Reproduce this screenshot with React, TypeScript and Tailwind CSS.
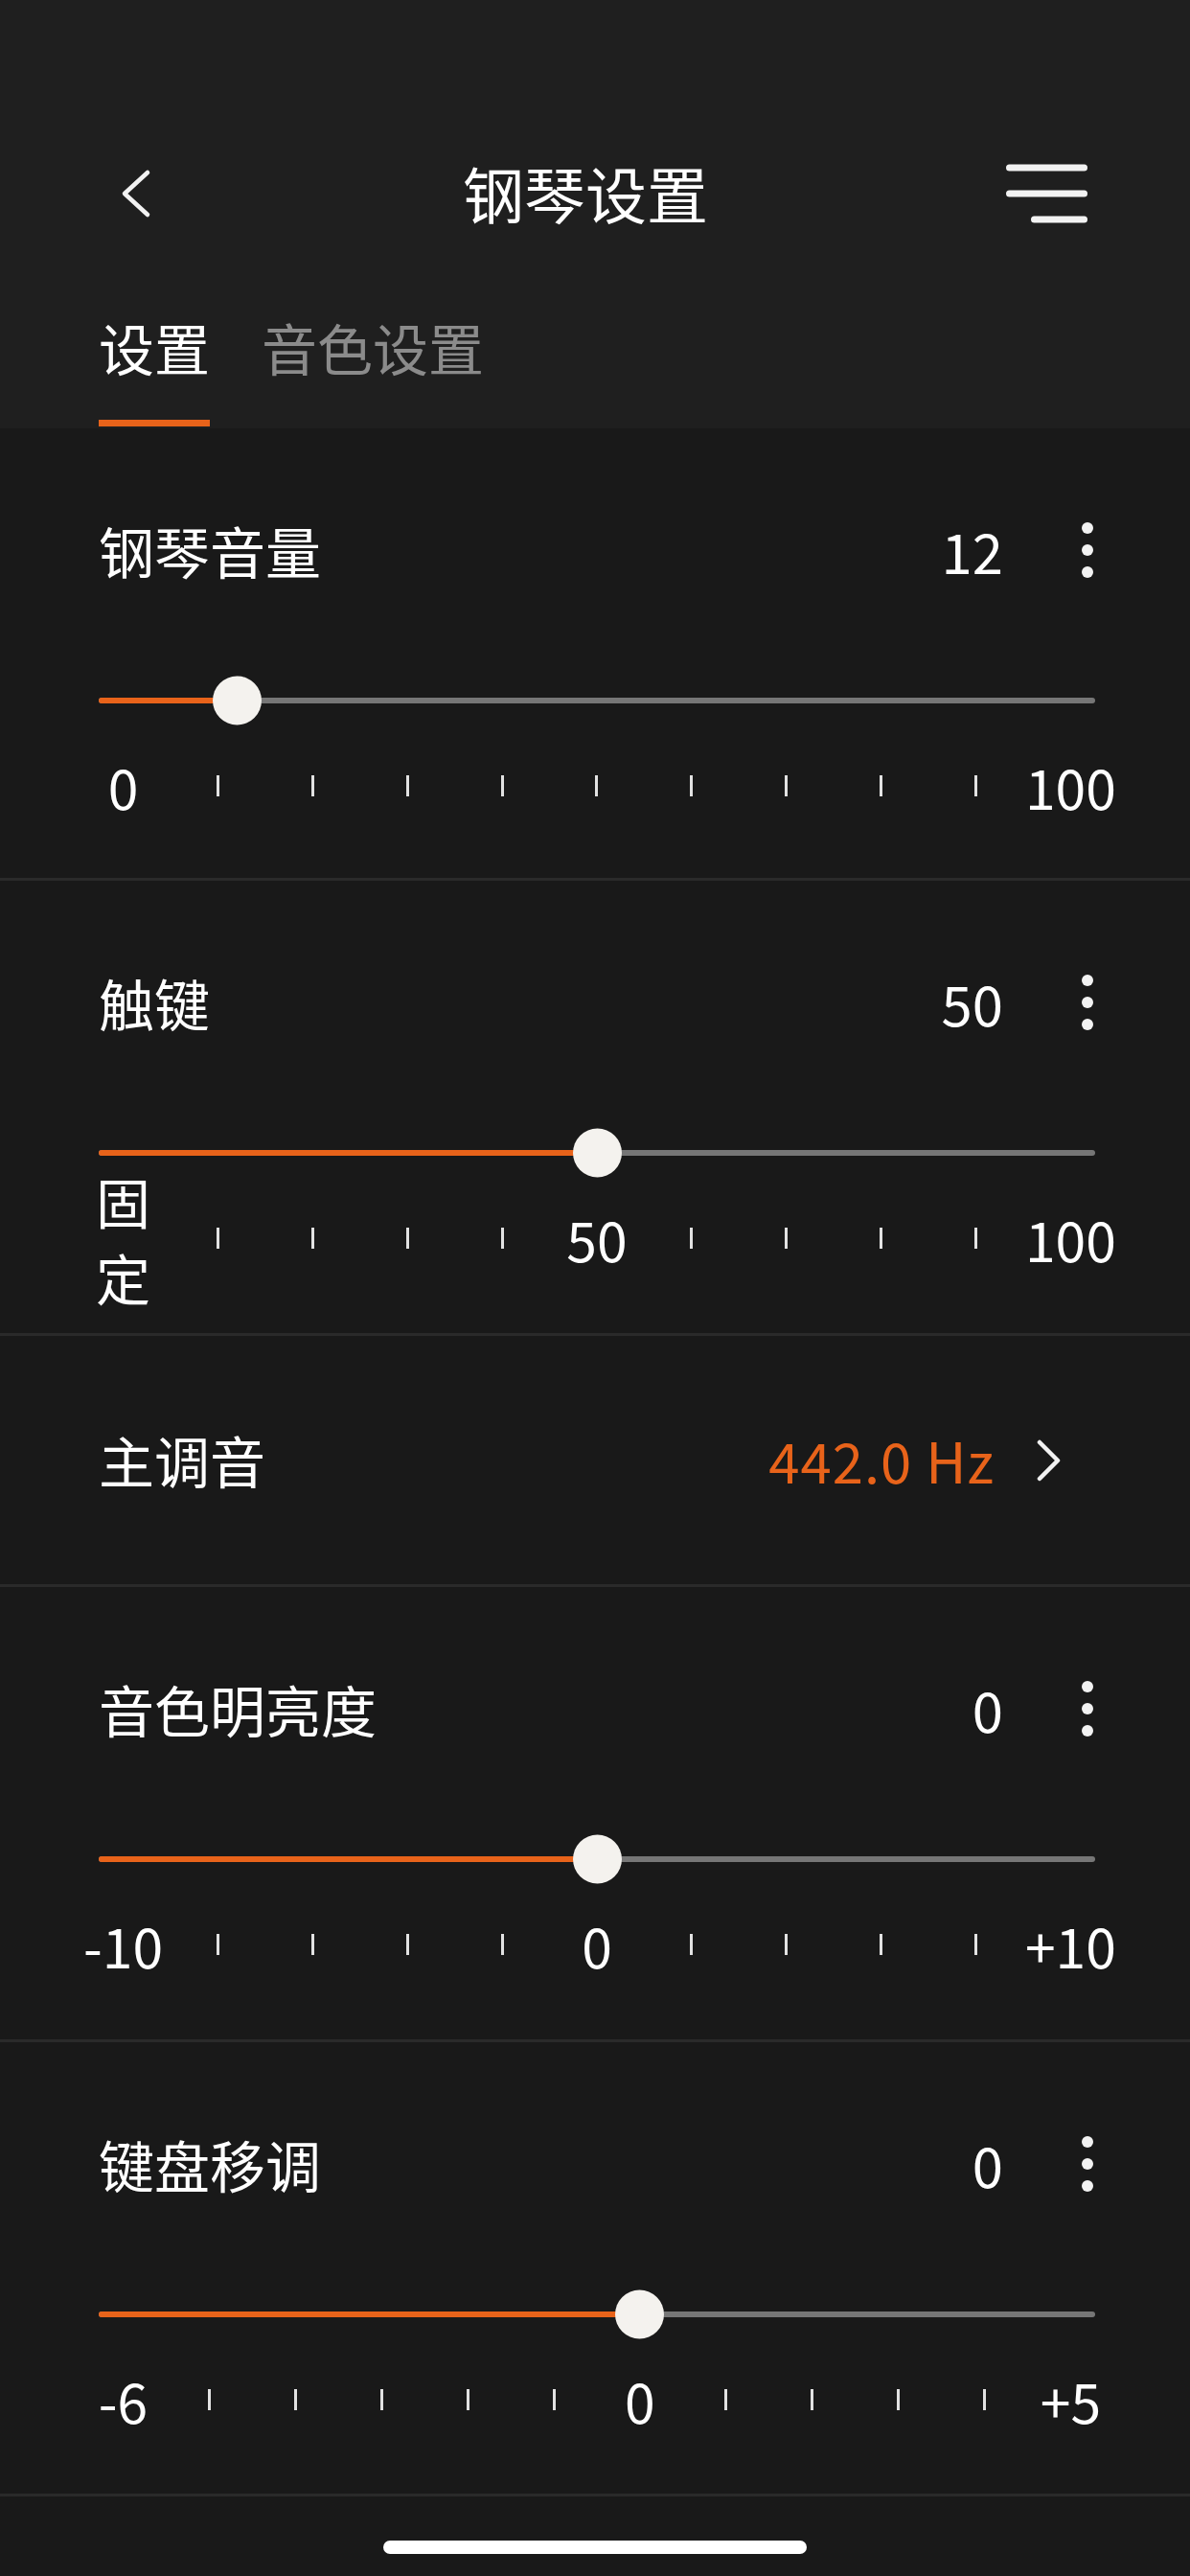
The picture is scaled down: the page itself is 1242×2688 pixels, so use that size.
import React from 'react';

const FONT = '"Noto Sans CJK SC", "Noto Sans", sans-serif';

interface SliderSetting {
  label: string;
  value: string;
  fraction: number;
  marks: (string | null)[];
  height: string;
}

const Kebab = () => (
  <div className="flex flex-col items-center justify-center gap-[11px] w-[24px] -mr-[4px]">
    <span className="w-[12px] h-[12px] rounded-full bg-[#f2f2f2]" />
    <span className="w-[12px] h-[12px] rounded-full bg-[#f2f2f2]" />
    <span className="w-[12px] h-[12px] rounded-full bg-[#f2f2f2]" />
  </div>
);

const Slider = ({ fraction }: { fraction: number }) => (
  <div className="relative h-[6px] w-full rounded-full bg-[#767676]">
    <div
      className="absolute left-0 top-0 h-full rounded-l-full bg-[#e8631a]"
      style={{ width: `calc(${fraction} * (100% - 51px) + 25px)` }}
    />
    <div
      className="absolute top-1/2 -translate-y-1/2 w-[51px] h-[51px] rounded-full bg-[#f4f2ee]"
      style={{ left: `calc(${fraction} * (100% - 51px))` }}
    />
  </div>
);

const Marks = ({ marks }: { marks: (string | null)[] }) => (
  <div className="flex justify-between items-center h-[60px]">
    {marks.map((m, i) => (
      <div key={i} className="w-[51px] h-[60px] flex items-center justify-center">
        {m === null ? (
          <span className="w-[3px] h-[22px] bg-[#e2e2e2]" />
        ) : m === '固定' ? (
          <span className="flex flex-col items-center text-[57px] leading-[80px] text-white">
            <span>固</span>
            <span>定</span>
          </span>
        ) : (
          <span className="whitespace-nowrap text-[57px] leading-[60px] text-white">{m}</span>
        )}
      </div>
    ))}
  </div>
);

const SliderSection = ({ setting }: { setting: SliderSetting }) => (
  <section className={`${setting.height} pt-[87px] pl-[103px] pr-[99px] border-b-[3px] border-[#2a2a2a] box-border`}>
    <div className="flex items-center h-[80px]">
      <span className="flex-1 text-[58px] text-white">{setting.label}</span>
      <span className="text-[58px] text-white mr-[76px]">{setting.value}</span>
      <Kebab />
    </div>
    <div className="mt-[87px] h-[60px] flex items-center">
      <Slider fraction={setting.fraction} />
    </div>
    <div className="mt-[29px]">
      <Marks marks={setting.marks} />
    </div>
  </section>
);

const ticks = (n: number) => Array.from({ length: n }, () => null);

const volume: SliderSetting = {
  label: '钢琴音量',
  value: '12',
  fraction: 0.12,
  marks: ['0', ...ticks(9), '100'],
  height: 'h-[472px]',
};

const touch: SliderSetting = {
  label: '触键',
  value: '50',
  fraction: 0.5,
  marks: ['固定', ...ticks(4), '50', ...ticks(4), '100'],
  height: 'h-[475px]',
};

const brightness: SliderSetting = {
  label: '音色明亮度',
  value: '0',
  fraction: 0.5,
  marks: ['-10', ...ticks(4), '0', ...ticks(4), '+10'],
  height: 'h-[475px]',
};

const transpose: SliderSetting = {
  label: '键盘移调',
  value: '0',
  fraction: 6 / 11,
  marks: ['-6', ...ticks(5), '0', ...ticks(4), '+5'],
  height: 'h-[474px]',
};

export default function App() {
  return (
    <div className="w-[1242px] h-[2688px] bg-[#191919] flex flex-col overflow-hidden" style={{ fontFamily: FONT }}>
      {/* Header */}
      <header className="h-[447px] bg-[#1f1f1f] pt-[142px] flex flex-col">
        <div className="relative h-[120px] flex items-center justify-center">
          <svg className="absolute left-[122px] top-1/2 -translate-y-1/2" width="40" height="56" viewBox="0 0 40 56" fill="none">
            <polyline points="32,6 8,28 32,50" stroke="#f2f2f2" strokeWidth="4.5" strokeLinecap="round" strokeLinejoin="round" />
          </svg>
          <h1 className="text-[64px] text-white font-normal mr-[20px] -mt-[5px]">钢琴设置</h1>
          <div className="absolute right-[107px] top-1/2 -translate-y-1/2 flex flex-col items-end gap-[20px]">
            <span className="w-[85px] h-[7px] rounded-full bg-[#f2f2f2]" />
            <span className="w-[85px] h-[7px] rounded-full bg-[#f2f2f2]" />
            <span className="w-[59px] h-[7px] rounded-full bg-[#f2f2f2]" />
          </div>
        </div>
        <div className="flex gap-[54px] pl-[103px] pt-[60px]">
          <div className="flex flex-col">
            <span className="text-[58px] leading-[80px] text-white">设置</span>
            <span className="mt-[36px] h-[7px] w-full bg-[#e8631a]" />
          </div>
          <div className="flex flex-col">
            <span className="text-[58px] leading-[80px] text-[#8b8b8b]">音色设置</span>
          </div>
        </div>
      </header>

      <SliderSection setting={volume} />
      <SliderSection setting={touch} />

      {/* Master tuning */}
      <section className="h-[262px] pl-[103px] pr-[134px] flex items-center border-b-[3px] border-[#2a2a2a] box-border">
        <span className="flex-1 text-[58px] text-white">主调音</span>
        <span className="text-[58px] tracking-[1px] text-[#e8631a] mr-[42px]">442.0 Hz</span>
        <svg width="28" height="46" viewBox="0 0 28 46" fill="none">
          <polyline points="5,4 24,23 5,42" stroke="#f2f2f2" strokeWidth="4.5" strokeLinecap="round" strokeLinejoin="round" />
        </svg>
      </section>

      <SliderSection setting={brightness} />
      <SliderSection setting={transpose} />

      <div className="flex-1 flex justify-center pt-[46px]">
        <span className="w-[442px] h-[14px] rounded-full bg-white" />
      </div>
    </div>
  );
}
